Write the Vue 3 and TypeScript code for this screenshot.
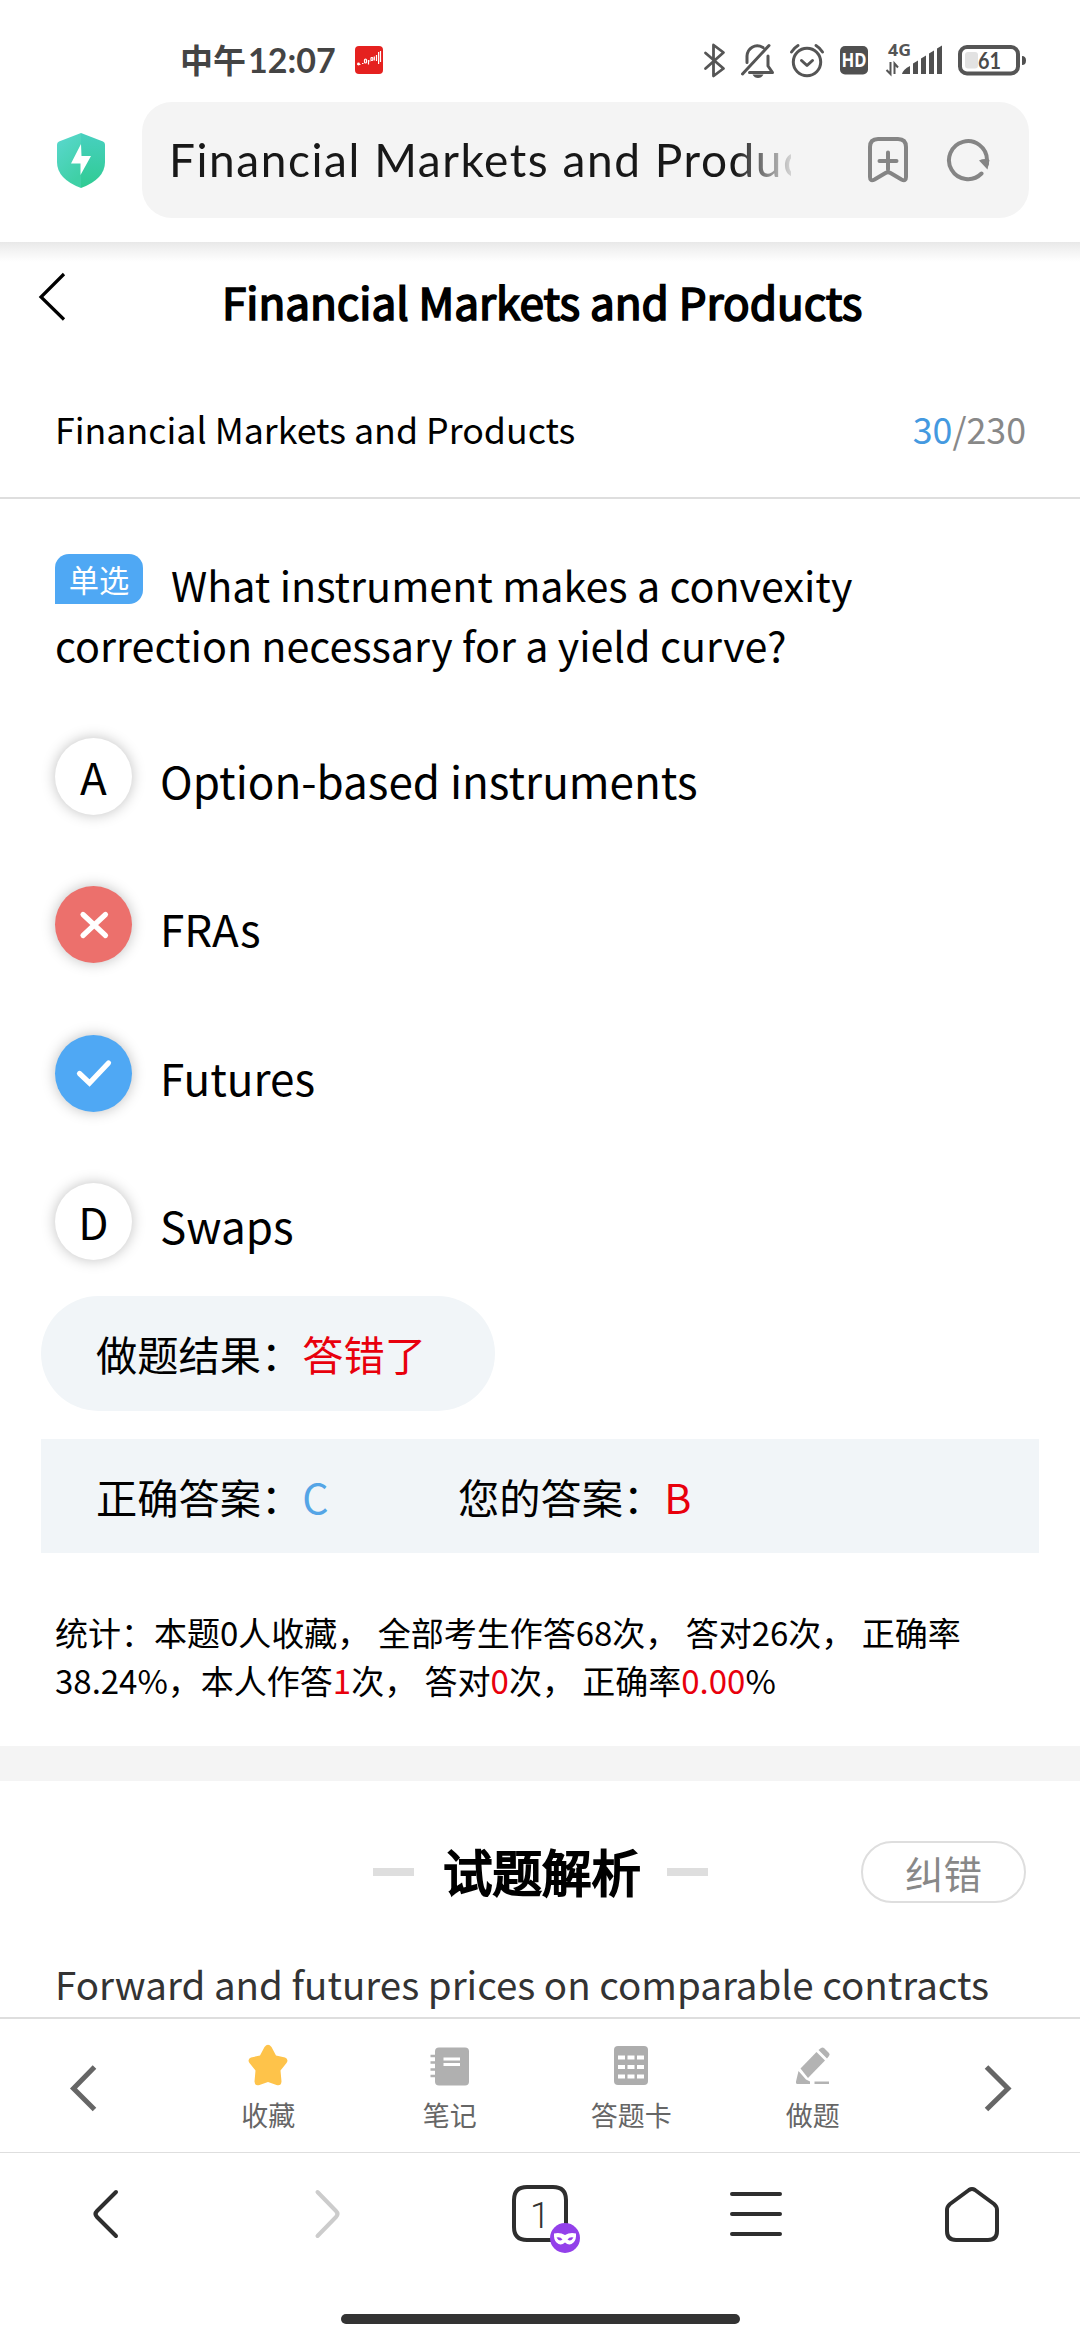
<script setup lang="ts">
interface Option {
  key: string
  text: string
  state: 'plain' | 'wrong' | 'right'
}

const title = 'Financial Markets and Products'
const options: Option[] = [
  { key: 'A', text: 'Option-based instruments', state: 'plain' },
  { key: 'B', text: 'FRAs', state: 'wrong' },
  { key: 'C', text: 'Futures', state: 'right' },
  { key: 'D', text: 'Swaps', state: 'plain' },
]
const dotCols = [619, 628.5, 638]
const dotRows = [2055.5, 2065, 2074.5]
</script>

<template>
  <div class="screen">
    <header class="status">
      <span class="time">中午<span class="digits">12:07</span></span>
      <svg class="app-badge" width="28" height="28" viewBox="0 0 28 28">
        <rect width="28" height="28" rx="4" fill="#e5211f" />
        <g fill="none" stroke="#fff" stroke-width="1.2">
          <path d="M2.5 18.5h3M7 17.5h1.5M21.5 9v6M23.6 6v12M25.5 5v11" />
          <rect x="9.5" y="13" width="2" height="4" rx="1" />
          <rect x="16" y="11.5" width="1.8" height="3" rx=".8" />
          <path d="M13.5 14v4.5M19.3 10.5v4M14.5 15h1" />
        </g>
        <circle cx="3.5" cy="18" r="1.4" fill="#fff" />
      </svg>
      <svg class="status-icons" width="330" height="40" viewBox="700 39 330 40">
        <g fill="none" stroke="#555" stroke-width="3" stroke-linejoin="round" stroke-linecap="round">
          <path d="M705.5 52l18 15.5-10 7.5V44l10 7.5-18 16" stroke-width="2.8" />
          <path d="M763 46.5c-8-4.500-15.500 1-16 8.500v6.500M749.500 71.500h23l-4.500-6.500V55M742.500 73l26.500-28.500" stroke-width="3" />
          <circle cx="807" cy="61" r="13.700" />
          <path d="M801.500 59.500l5.500 5 5.500-5M791.500 51q3-4.500 6.500-6.500M822.500 51q-3-4.500-6.500-6.500" />
        </g>
        <path d="M752.500 73.500h11q-2 3.500-5.500 3.500t-5.500-3.500z" fill="#555" />
        <rect x="840" y="45" width="28" height="28.500" rx="5" fill="#505050" />
        <text x="841.500" y="66" class="hd" textLength="25" lengthAdjust="spacingAndGlyphs">HD</text>
        <text x="888" y="54.500" class="net" textLength="23" lengthAdjust="spacingAndGlyphs">4G</text>
        <path d="M890.500 61v12l-4-4M894.500 73V62.500l3.500 4" fill="none" stroke="#555" stroke-width="2" />
        <g fill="#505050">
          <path d="M902 73q1-4.500 8-8v8zM913 73V62.500l5-3V73zM921 73V57.500l5-3V73zM929 73V52.500l5-3V73zM937 73V47.500l5-3V73z" />
          <path d="M1022 55q4 0 4 4.500t-4 4.500z" />
        </g>
        <rect x="960" y="46" width="58" height="26.500" rx="7" fill="none" stroke="#555" stroke-width="4" />
        <rect x="965" y="51" width="13" height="16.500" rx="3" fill="#e2e2e2" />
        <text x="978" y="68" class="pct" textLength="23" lengthAdjust="spacingAndGlyphs">61</text>
      </svg>
    </header>

    <div class="address">
      <svg width="48" height="55" viewBox="57 133 48 55">
        <defs>
          <linearGradient id="shieldL" x1="0" y1="0" x2="0.400" y2="1">
            <stop offset="0" stop-color="#5bd8d0" />
            <stop offset="1" stop-color="#3fd0a6" />
          </linearGradient>
          <linearGradient id="shieldR" x1="0" y1="0" x2="0" y2="1">
            <stop offset="0" stop-color="#48d0c0" />
            <stop offset="1" stop-color="#2fcb92" />
          </linearGradient>
        </defs>
        <path d="M81 133l-22 8.500q-2 .8-2 3V162q0 17 24 26z" fill="url(#shieldL)" />
        <path d="M81 133l22 8.500q2 .8 2 3V162q0 17-24 26z" fill="url(#shieldR)" />
        <path d="M81 144l-10 19.500h9.500V175l10.500-19h-9.500z" fill="#fff" />
      </svg>
      <div class="url-box">
        <span class="url">{{ title }}</span>
        <svg width="42" height="48" viewBox="867 136 42 48" fill="none" stroke="#858585" stroke-width="4" stroke-linejoin="round" stroke-linecap="round">
          <path d="M870 147q0-8 8-8h20q8 0 8 8v30q0 5-4.500 2.500l-11-6.500q-2.500-1.500-5 0l-11 6.500q-4.500 2.500-4.500-2.500z" />
          <path d="M888 152.500v17M879.500 161h17" />
        </svg>
        <svg class="reload" width="44" height="46" viewBox="946 137 44 46">
          <path d="M981.500 173.500A19 19 0 1 1 987 160v4" fill="none" stroke="#858585" stroke-width="4" stroke-linecap="round" />
          <path d="M979 160.500q5.500-2.500 10.500-.5l-2 9.500z" fill="#858585" />
        </svg>
      </div>
    </div>

    <main class="page">
      <div class="title-bar">
        <svg width="30" height="52" viewBox="37 270 30 52">
          <path d="M64 274L41 297l23 22.500" fill="none" stroke="#000" stroke-width="3.200" />
        </svg>
        <h1>{{ title }}</h1>
      </div>

      <div class="subject">
        <span>{{ title }}</span>
        <span class="count"><b>30</b>/230</span>
      </div>

      <p class="question"><span class="tag">单选</span>What instrument makes a convexity correction necessary for a yield curve?</p>

      <ul class="options">
        <li v-for="o in options" :key="o.key">
          <span class="bubble" :class="o.state">
            <template v-if="o.state === 'plain'">{{ o.key }}</template>
            <svg v-else width="40" height="40" viewBox="-20 -20 40 40">
              <path v-if="o.state === 'wrong'" d="M-11-10.500L11.500 10.500M11.500-10.500L-11 10.500" />
              <path v-else d="M-14.500.5l10 9.500 19-20" />
            </svg>
          </span>
          <span class="option-text">{{ o.text }}</span>
        </li>
      </ul>

      <div class="result">做题结果：<span class="red">答错了</span></div>
      <div class="answers">
        <span class="correct">正确答案：<span class="blue">C</span></span>
        <span>您的答案：<span class="red">B</span></span>
      </div>

      <p class="stats">统计：本题0人收藏， 全部考生作答68次， 答对26次， 正确率<br>38.24%，本人作答<span class="red">1</span>次， 答对<span class="red">0</span>次， 正确率<span class="red">0.00</span>%</p>

      <div class="divider"></div>

      <div class="analysis-head">
        <i class="dash"></i>
        <h2>试题解析</h2>
        <i class="dash"></i>
        <button class="fix">纠错</button>
      </div>
      <p class="analysis">Forward and futures prices on comparable contracts</p>
    </main>

    <nav class="tools">
      <svg class="prev" width="40" height="60" viewBox="64 2058 40 60">
        <path d="M94.500 2067L73.500 2088.500 94.500 2109.500" fill="none" stroke="#666" stroke-width="5" />
      </svg>
      <div class="tool">
        <svg width="44" height="44" viewBox="246 2042 44 44">
          <path d="M264.500 2047q3.500-4.500 7 0l4.500 8.500 9 2q4 2 1.500 5.500l-6 7.500 1 11q-.5 5-5 3.500l-8.500-3-8.500 3q-4.500 1.500-5-3.500l1-11-6-7.500q-2.500-3.500 1.500-5.500l9-2z" fill="#fec34a" />
        </svg>
        <span>收藏</span>
      </div>
      <div class="tool">
        <svg width="44" height="44" viewBox="428.500 2042 44 44">
          <rect x="435.500" y="2047.500" width="34" height="38" rx="4" fill="#b0b0b0" />
          <path d="M431 2056h6M431 2062.500h6M431 2069.500h6M431 2076h6" stroke="#b0b0b0" stroke-width="2.600" />
          <path d="M444 2059h16.500M444 2064.500h16.500" stroke="#fff" stroke-width="2.800" />
        </svg>
        <span>笔记</span>
      </div>
      <div class="tool">
        <svg width="44" height="44" viewBox="610 2042 44 44">
          <rect x="615" y="2046" width="34" height="39" rx="4" fill="#adadad" />
          <template v-for="y in dotRows" :key="y">
            <rect v-for="x in dotCols" :key="x" :x="x" :y="y" width="7" height="4" fill="#fff" />
          </template>
        </svg>
        <span>答题卡</span>
      </div>
      <div class="tool">
        <svg width="44" height="44" viewBox="791 2042 44 44">
          <g fill="#b3b3b3">
            <path d="M818.500 2050l2.500-2q1.500-1 3 0l5 5q1.300 1.500 0 3l-2 2.500z" />
            <path d="M816.500 2052l8.500 8.500-17 17.500-7.500-9.500z" />
            <path d="M798.500 2071l7.500 8.500 4 2v2.500h-13q-1.500-.5-1-2.500z" />
            <rect x="814.500" y="2081.500" width="14.500" height="2.500" />
          </g>
        </svg>
        <span>做题</span>
      </div>
      <svg class="next" width="40" height="60" viewBox="978 2058 40 60">
        <path d="M986.500 2067L1008 2088.500 986.500 2109.500" fill="none" stroke="#666" stroke-width="5" />
      </svg>
    </nav>

    <nav class="browser">
      <svg viewBox="68 2174 80 80">
        <path d="M116 2192L97 2211q-3 3 0 6L116 2236" stroke="#2e2e2e" />
      </svg>
      <svg viewBox="284 2174 80 80">
        <path d="M317.500 2192L336 2211q3 3 0 6L317.500 2236" stroke="#ccc" />
      </svg>
      <svg viewBox="500 2174 80 80">
        <path d="M527 2187h26q13 0 13 13v27q0 13-13 13h-26q-13 0-13-13v-27q0-13 13-13z" stroke="#2e2e2e" />
        <text x="540" y="2227.500" text-anchor="middle" class="tab-count">1</text>
        <circle cx="565" cy="2238" r="15" fill="#9340ea" />
        <path d="M554 2233.500q6-1.500 11 1.500 5-3 11-1.500.5 6-2.500 9-4 4-8.500 0-4.500 4-8.500 0-3-3-2.500-9z" fill="#fff" />
        <path d="M556.500 2237.500q4-1 6 2-3.500 2.500-6-2zM573.500 2237.500q-4-1-6 2 3.500 2.500 6-2z" fill="#9340ea" />
      </svg>
      <svg viewBox="716 2174 80 80">
        <path d="M732 2194h48M732 2214h48M732 2234h48" stroke="#2e2e2e" />
      </svg>
      <svg viewBox="932 2174 80 80">
        <path d="M969 2190q3-2 6 0l19 14q3 2.500 3 6v21q0 9-9 9h-32q-9 0-9-9v-21q0-3.500 3-6z" stroke="#2e2e2e" />
      </svg>
    </nav>
    <div class="home-row"><div class="home-bar"></div></div>
  </div>
</template>

<style>
body {
  margin: 0;
  background: #fff;
}
</style>

<style scoped>
.screen {
  width: 1080px;
  height: 2340px;
  overflow: hidden;
  display: flex;
  flex-direction: column;
  background: #fff;
  color: #000;
  font-family: 'Noto Sans CJK SC', sans-serif;
}
svg {
  display: block;
  flex: none;
}
h1, h2, p, ul {
  margin: 0;
  padding: 0;
}
.status {
  height: 102px;
  flex: none;
  box-sizing: border-box;
  padding: 17px 0 0 180px;
  display: flex;
  align-items: center;
}
.time {
  width: 175px;
  font-size: 33px;
  line-height: 60px;
  font-weight: 700;
  color: #444;
  white-space: nowrap;
}
.digits {
  font-family: Lato, sans-serif;
  font-size: 34px;
  margin-left: 2px;
}
.status-icons {
  margin-left: 317px;
}
.hd {
  font: 700 19px 'Noto Sans', sans-serif;
  fill: #fff;
}
.net {
  font: 700 16px 'Noto Sans', sans-serif;
  fill: #555;
}
.pct {
  font: 700 23px Lato, sans-serif;
  fill: #4a4a4a;
}
.address {
  height: 140px;
  flex: none;
  box-sizing: border-box;
  padding: 0 51px 24px 57px;
  display: flex;
  align-items: center;
  gap: 37px;
}
.url-box {
  width: 887px;
  height: 116px;
  box-sizing: border-box;
  padding-left: 27px;
  border-radius: 30px;
  background: #f4f4f4;
  display: flex;
  align-items: center;
}
.url {
  width: 622px;
  margin-right: 76px;
  overflow: hidden;
  white-space: nowrap;
  font-family: Lato, sans-serif;
  font-size: 46px;
  letter-spacing: 1.550px;
  line-height: 70px;
  color: #181818;
  -webkit-mask-image: linear-gradient(to right, #000 565px, transparent 632px);
  mask-image: linear-gradient(to right, #000 565px, transparent 632px);
}
.reload {
  margin-left: 37px;
}
.page {
  height: 1775px;
  flex: none;
  overflow: hidden;
  background: linear-gradient(#e8e8e8, #f0f0f0 6px, #fff 20px);
}
.title-bar {
  height: 128px;
  padding: 28px 0 0 37px;
  box-sizing: border-box;
  display: flex;
}
h1 {
  margin-left: 155px;
  margin-top: 1px;
  font-size: 44px;
  line-height: 60px;
  font-weight: 400;
  -webkit-text-stroke: 1.700px #000;
  white-space: nowrap;
}
.subject {
  height: 129px;
  box-sizing: border-box;
  padding: 0 54px 11px 55px;
  border-bottom: 2px solid #dedede;
  display: flex;
  justify-content: space-between;
  align-items: center;
  font-size: 35.750px;
}
.count {
  color: #888;
}
.count b {
  font-weight: 400;
  color: #4499e0;
}
.question {
  padding: 55px 55px 0;
  font-size: 41.250px;
  line-height: 60px;
  height: 239px;
  box-sizing: border-box;
}
.tag {
  display: inline-block;
  vertical-align: top;
  width: 88px;
  height: 50px;
  margin-right: 28px;
  border-radius: 14px 14px 14px 0;
  background: #4fa8f4;
  color: #fff;
  font-size: 30.250px;
  line-height: 50px;
  text-align: center;
}
.options {
  list-style: none;
}
.options li {
  height: 148.250px;
  padding-left: 55px;
  display: flex;
  align-items: flex-start;
}
.bubble {
  width: 77px;
  height: 77px;
  border-radius: 50%;
  box-shadow: 0 0 14px rgba(0, 0, 0, 0.25);
  display: flex;
  align-items: center;
  justify-content: center;
  font-size: 44px;
  line-height: 77px;
}
.bubble path {
  fill: none;
  stroke: #fff;
  stroke-width: 5.200;
  stroke-linecap: round;
}
.wrong {
  background: #ec706c;
}
.right {
  background: #4fa8f4;
}
.option-text {
  margin: 4px 0 0 28px;
  font-size: 44px;
  line-height: 77px;
}
.result {
  width: 454px;
  height: 115px;
  margin: -35px 0 28px 41px;
  padding-left: 55px;
  box-sizing: border-box;
  border-radius: 58px;
  background: #f1f5f8;
  font-size: 41.250px;
  line-height: 114px;
}
.answers {
  height: 114px;
  margin: 0 41px;
  padding-left: 55px;
  display: flex;
  background: #f1f5f8;
  font-size: 41.250px;
  line-height: 114px;
}
.correct {
  width: 362px;
}
.red {
  color: #e8000c;
}
.blue {
  color: #55a5e6;
}
.stats {
  height: 193px;
  box-sizing: border-box;
  padding: 55px 0 0 55px;
  font-size: 33px;
  line-height: 48px;
  white-space: nowrap;
}
.divider {
  height: 35px;
  background: #f4f4f4;
}
.analysis-head {
  height: 182px;
  padding-left: 373px;
  display: flex;
  align-items: center;
}
.dash {
  width: 41px;
  height: 8px;
  background: #dedede;
}
h2 {
  margin: -2px 28px 0 29px;
  width: 196px;
  font-size: 49.500px;
  line-height: 70px;
  font-weight: 400;
  -webkit-text-stroke: 2.200px #000;
  white-space: nowrap;
}
.fix {
  width: 165px;
  height: 62px;
  margin-left: 153px;
  padding: 0;
  border: 2px solid #dedede;
  border-radius: 31px;
  background: none;
  color: #888;
  font: 38.500px/58px 'Noto Sans CJK SC', sans-serif;
}
.analysis {
  margin-top: -11px;
  padding-left: 55px;
  font-size: 38.500px;
  line-height: 62px;
  color: #333;
  white-space: nowrap;
}
.tools {
  height: 136px;
  flex: none;
  box-sizing: border-box;
  border-top: 2px solid #dedede;
  border-bottom: 1px solid #dedede;
  display: flex;
  align-items: flex-start;
}
.prev {
  margin: 39px 73.500px 0 64px;
}
.next {
  margin: 39px 0 0 74.500px;
}
.tool {
  width: 181.500px;
  padding-top: 23px;
  display: flex;
  flex-direction: column;
  align-items: center;
  font-size: 27px;
  line-height: 40px;
  color: #666;
}
.tool span {
  margin-top: 9px;
}
.browser {
  height: 122px;
  flex: none;
  display: flex;
  align-items: center;
  justify-content: space-around;
}
.browser svg {
  width: 80px;
  height: 80px;
}
.browser path[stroke] {
  fill: none;
  stroke-width: 4;
  stroke-linecap: round;
  stroke-linejoin: round;
}
.tab-count {
  font: 300 36px Roboto, sans-serif;
  fill: #333;
}
.home-row {
  flex: 1;
  display: flex;
  justify-content: center;
  align-items: flex-start;
  padding-top: 39px;
}
.home-bar {
  width: 399px;
  height: 10px;
  border-radius: 5px;
  background: #333;
}
</style>
